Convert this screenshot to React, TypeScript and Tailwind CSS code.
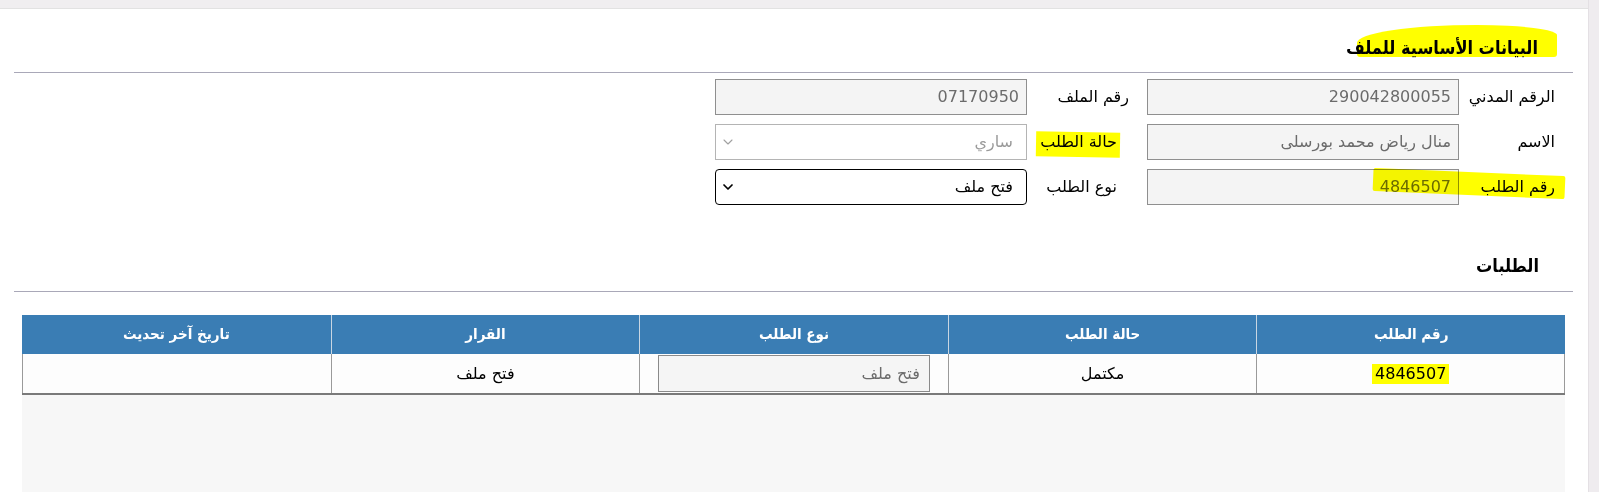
import React from 'react';
import { ChevronDown } from 'lucide-react';

const FONT = "font-['DejaVu_Sans','Noto_Sans',sans-serif]";
const COND = "font-['DejaVu_Sans_Condensed','DejaVu_Sans',sans-serif]";

function Highlight({ className }: { className: string }) {
    return <span className={`absolute bg-[#ffff00] mix-blend-multiply pointer-events-none ${className}`} />;
}

function Field({ value }: { value: string }) {
    return (
        <div className="w-[312px] h-[36px] bg-[#f4f4f4] border border-[#8f8f8f] flex items-center justify-start pr-[7px] text-[16px] text-[#6b6b6b]">
            {value}
        </div>
    );
}

function SelectBox({ value, disabled }: { value: string; disabled?: boolean }) {
    return (
        <div
            className={`w-[312px] h-[36px] flex items-center justify-between pr-[13px] pl-[4px] text-[16px] bg-white ${
                disabled ? 'border border-[#b4b4b4] text-[#9a9a9a]' : 'border border-black rounded-[4px] text-black'
            }`}
        >
            <span>{value}</span>
            <ChevronDown size={16} strokeWidth={disabled ? 1.6 : 2.6} className={disabled ? 'text-[#a0a0a0]' : 'text-black'} />
        </div>
    );
}

export default function App() {
    const columns = ['رقم الطلب', 'حالة الطلب', 'نوع الطلب', 'القرار', 'تاريخ آخر تحديث'];

    return (
        <div className={`w-[1599px] h-[492px] bg-white flex overflow-hidden ${FONT}`}>
            <div className="flex-1 flex flex-col">
                {/* شريط علوي */}
                <div className="h-[9px] bg-[#f0eef0] border-b border-[#e2e2e2]" />

                <div dir="rtl" className="flex-1 flex flex-col pl-[14px] pr-[15px]">
                    {/* البيانات الأساسية */}
                    <div className="relative h-[63px] flex items-end pb-[10px] pr-[35px]">
                        <h2 className={`text-[18px] font-bold leading-[28px] text-black ${COND}`}>البيانات الأساسية للملف</h2>
                        <Highlight className="right-[16px] top-[16px] w-[200px] h-[32px] rounded-tl-[120px_18px] rounded-tr-[80px_10px] rounded-b-[3px]" />
                    </div>
                    <div className="border-t border-[#a9a8b8]" />

                    <div className="pt-[6px] flex flex-col gap-[9px] text-[16px] text-black">
                        <div className="h-[36px] flex items-center pr-[18px]">
                            <div className="w-[96px] text-right">الرقم المدني</div>
                            <Field value="290042800055" />
                            <div className="w-[120px] pr-[18px] text-right">رقم الملف</div>
                            <Field value="07170950" />
                        </div>
                        <div className="relative h-[36px] flex items-center pr-[18px]">
                            <div className="w-[96px] text-right">الاسم</div>
                            <Field value="منال رياض محمد بورسلى" />
                            <div className="w-[120px] pr-[30px] text-right">حالة الطلب</div>
                            <SelectBox value="ساري" disabled />
                            <Highlight className="right-[453px] top-[8px] w-[84px] h-[25px] rotate-[1deg]" />
                        </div>
                        <div className="relative h-[36px] flex items-center pr-[18px]">
                            <div className="w-[96px] text-right">رقم الطلب</div>
                            <Field value="4846507" />
                            <div className="w-[120px] pr-[30px] text-right">نوع الطلب</div>
                            <SelectBox value="فتح ملف" />
                            <Highlight className="right-[8px] top-[3px] w-[192px] h-[23px] rotate-[2.5deg] rounded-[2px]" />
                        </div>
                    </div>

                    {/* الطلبات */}
                    <div className="h-[86px] flex items-end pb-[11px] pr-[34px]">
                        <h2 className={`text-[18px] font-semibold leading-[28px] text-black ${COND}`}>الطلبات</h2>
                    </div>
                    <div className="border-t border-[#a9a8b8]" />

                    <div className="mt-[23px] mx-[8px] flex-1 flex flex-col bg-[#f7f7f7]">
                        <div className={`grid grid-cols-5 h-[39px] bg-[#3a7db4] text-white text-[15px] font-bold ${COND}`}>
                            {columns.map((c, i) => (
                                <div key={c} className={`flex items-center justify-center ${i < 4 ? 'border-l border-[#c9d6e2]' : ''}`}>
                                    {c}
                                </div>
                            ))}
                        </div>
                        <div className="grid grid-cols-5 h-[41px] bg-[#fdfdfd] border-b-2 border-[#7a7a7a] text-[16px] text-black">
                            <div className="flex items-center justify-center border-l border-[#9a9a9a] border-r">
                                <span className="bg-[#ffff00] px-[3px] leading-[20px]">4846507</span>
                            </div>
                            <div className="flex items-center justify-center border-l border-[#9a9a9a]">مكتمل</div>
                            <div className="flex items-center justify-center border-l border-[#9a9a9a] px-[18px]">
                                <div className="w-full h-[37px] bg-[#f5f5f5] border border-[#8a8a8a] flex items-center pr-[9px] text-[#6b6b6b]">
                                    فتح ملف
                                </div>
                            </div>
                            <div className="flex items-center justify-center border-l border-[#9a9a9a]">فتح ملف</div>
                            <div className="border-l border-[#9a9a9a]" />
                        </div>
                    </div>
                </div>
            </div>
            <div className="w-[11px] bg-[#efecef] border-l border-[#e4e0e4]" />
        </div>
    );
}
